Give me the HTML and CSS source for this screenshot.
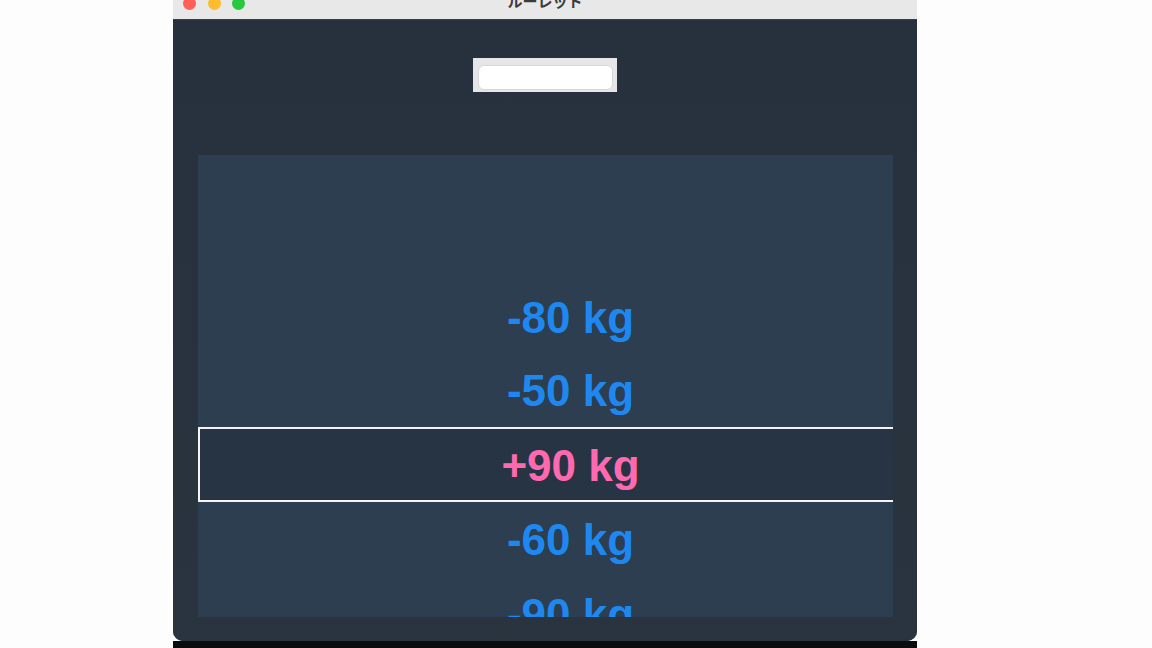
FILE: index.html
```html
<!DOCTYPE html>
<html lang="ja">
<head>
<meta charset="utf-8">
<title>ルーレット</title>
<link rel="stylesheet" href="styles.css">
</head>
<body>
<div class="frame">
  <div class="window">
    <div class="titlebar">
      <div class="lights">
        <span class="light red"></span>
        <span class="light yellow"></span>
        <span class="light green"></span>
      </div>
      <div class="title">ルーレット</div>
      <div class="spacer"></div>
    </div>
    <div class="content">
      <div class="field">
        <input class="input" type="text" value="">
      </div>
      <div class="panel">
        <div class="list">
          <div class="row row-a">-80 kg</div>
          <div class="row row-b">-50 kg</div>
          <div class="row selected">+90 kg</div>
          <div class="row">-60 kg</div>
          <div class="row">-90 kg</div>
        </div>
      </div>
    </div>
  </div>
  <div class="shadow"></div>
</div>
</body>
</html>
```

FILE: styles.css
```css
html, body {
  margin: 0;
  padding: 0;
  background: #fdfdfd;
  height: 648px;
  overflow: hidden;
  font-family: "Liberation Sans", Arial, sans-serif;
}

.frame {
  width: 744px;
  margin-left: 173px;
  display: flex;
  flex-direction: column;
}

.window {
  height: 641px;
  display: flex;
  flex-direction: column;
  border-radius: 0 0 10px 10px;
  overflow: hidden;
  background: #28323f;
}

.titlebar {
  height: 20px;
  flex: none;
  background: #e8e8e8;
  border-bottom: 1px solid #3a3f46;
  box-sizing: border-box;
  display: grid;
  grid-template-columns: 1fr auto 1fr;
  align-items: start;
  overflow: hidden;
}

.lights {
  display: flex;
  gap: 11.5px;
  margin-left: 10px;
  margin-top: -3px;
}

.light {
  width: 13px;
  height: 13px;
  border-radius: 50%;
  display: block;
}
.red { background: #fe5f57; }
.yellow { background: #febc2e; }
.green { background: #28c840; }

.title {
  font-family: "Noto Sans CJK JP", sans-serif;
  font-size: 15px;
  line-height: 15px;
  font-weight: 700;
  color: #3b3b3b;
  margin-top: -7px;
}

.content {
  flex: 1;
  display: flex;
  flex-direction: column;
  align-items: center;
  background: linear-gradient(#27313e, #29343f);
}

.field {
  margin-top: 38px;
  width: 144px;
  height: 34px;
  box-sizing: border-box;
  padding: 7px 4px 2px 5px;
  background: #e6e6e6;
}

.input {
  display: block;
  width: 100%;
  height: 100%;
  box-sizing: border-box;
  border: 1px solid #d8d8d8;
  border-radius: 6px;
  background: #ffffff;
  margin: 0;
  padding: 0 6px;
  outline: none;
}

.panel {
  margin-top: 63px;
  align-self: stretch;
  margin-left: 25px;
  margin-right: 24px;
  height: 462px;
  background: #2c3e50;
  overflow: hidden;
}

.list {
  width: calc(100% + 50px);
  padding-top: 126px;
}

.row {
  height: 75px;
  line-height: 75px;
  text-align: center;
  font-size: 44px;
  font-weight: 700;
  color: #1e88f0;
  box-sizing: border-box;
}

.row-a {
  height: 74px;
  line-height: 74px;
}

.row-b {
  height: 72px;
  line-height: 72px;
}

.selected {
  border: 2px solid #f4f4f4;
  background: #273444;
  color: #ff69b0;
  line-height: 73px;
}

.shadow {
  height: 7px;
  background: #0c0c0c;
}
```
